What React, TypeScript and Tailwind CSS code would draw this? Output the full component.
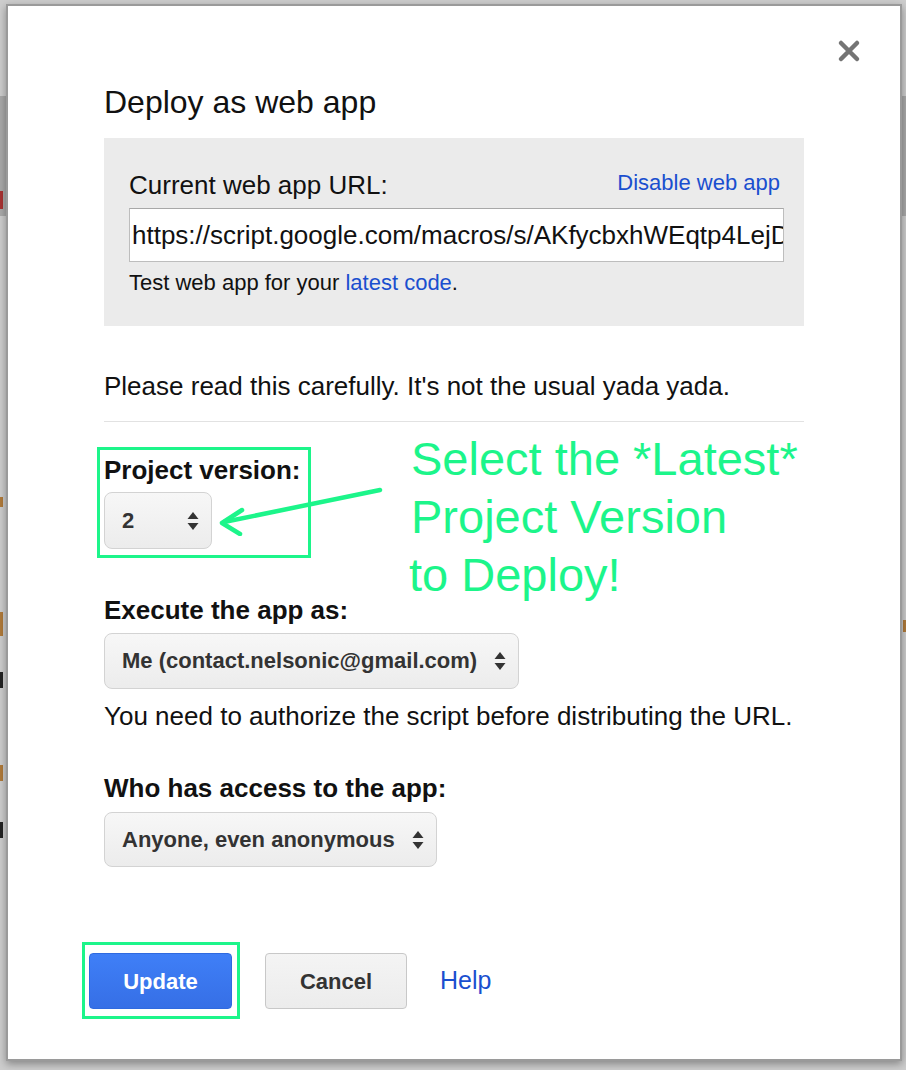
const font = { fontFamily: '"Liberation Sans", Arial, Helvetica, sans-serif' }

const Arrows = () => (
  <svg width="12" height="20" viewBox="0 0 12 20" className="shrink-0">
    <path d="M6 1 L11.5 8 L0.5 8 Z" fill="#333" />
    <path d="M6 19 L11.5 12 L0.5 12 Z" fill="#333" />
  </svg>
)

const Select = ({ label, className }: { label: string; className?: string }) => (
  <div
    className={`flex items-center gap-[17px] whitespace-nowrap rounded-[8px] border-[1.5px] border-[#d3d3d3] bg-gradient-to-b from-[#f7f7f7] to-[#ececec] pl-[17px] pr-[12px] text-[22px] font-bold text-[#333] ${className ?? ''}`}
  >
    <span className="leading-[26px]">{label}</span>
    <Arrows />
  </div>
)

export default function App() {
  return (
    <div className="relative w-[906px] h-[1070px] overflow-hidden bg-[#cdcdcd] pt-[4px] pl-[6px]" style={font}>
      {/* page behind the dialog */}
      <div className="absolute left-0 top-[96px] h-[120px] w-[906px] bg-[#a9a9a9]" />
      <div className="absolute left-0 top-[191px] h-[18px] w-[3px] bg-[#a83232]" />
      <div className="absolute left-0 top-[497px] h-[10px] w-[3px] bg-[#b07a3a]" />
      <div className="absolute left-0 top-[612px] h-[24px] w-[3px] bg-[#b07a3a]" />
      <div className="absolute left-0 top-[672px] h-[16px] w-[3px] bg-[#222]" />
      <div className="absolute left-0 top-[765px] h-[16px] w-[3px] bg-[#b07a3a]" />
      <div className="absolute left-0 top-[822px] h-[16px] w-[3px] bg-[#222]" />
      <div className="absolute right-0 top-[620px] h-[12px] w-[3px] bg-[#b07a3a]" />

      <div className="relative w-[896px] h-[1057px] border-2 border-[#9a9a9a] bg-white shadow-[0_3px_8px_rgba(0,0,0,0.35)] pl-[96px] pt-[77px]">
        {/* close */}
        <svg width="24" height="24" viewBox="0 0 24 24" className="absolute left-[829px] top-[33px]">
          <path d="M4 4 L20 20 M20 4 L4 20" stroke="#747474" strokeWidth="4.5" strokeLinecap="round" />
        </svg>

        <h1 className="text-[32px] leading-[38px] text-[#111]">Deploy as web app</h1>

        <div className="mt-[17px] w-[700px] h-[188px] bg-[#ebebeb] pl-[25px] pr-[20px] pt-[32px]">
          <div className="flex items-start justify-between">
            <span className="text-[26px] leading-[30px] text-[#111]">Current web app URL:</span>
            <span className="-mt-[2px] mr-[4px] text-[22px] leading-[30px] text-[#1a4fcf]">Disable web app</span>
          </div>
          <div className="mt-[8px] h-[54px] overflow-hidden whitespace-nowrap border border-[#bdbdbd] border-t-[#a8a8a8] bg-white pl-[2px] text-[26px] leading-[52px] text-[#111]">
            https://script.google.com/macros/s/AKfycbxhWEqtp4LejDz8Kx
          </div>
          <p className="mt-[8px] text-[22px] leading-[26px] text-[#111]">
            Test web app for your <span className="text-[#1a4fcf]">latest code</span>.
          </p>
        </div>

        <p className="mt-[45px] text-[26px] leading-[30px] text-[#111]">
          Please read this carefully. It's not the usual yada yada.
        </p>
        <div className="mt-[20px] h-px w-[700px] bg-[#e2e2e2]" />

        <h2 className="mt-[33px] text-[26px] font-bold leading-[30px] text-[#111]">Project version:</h2>
        <Select label="2" className="mt-[7px] h-[57px] w-[108px] justify-between" />

        <h2 className="mt-[46px] text-[26px] font-bold leading-[30px] text-[#111]">Execute the app as:</h2>
        <Select label="Me (contact.nelsonic@gmail.com)" className="mt-[8px] h-[56px] w-fit" />
        <p className="mt-[12px] text-[26px] leading-[30px] text-[#111]">
          You need to authorize the script before distributing the URL.
        </p>

        <h2 className="mt-[42px] text-[26px] font-bold leading-[30px] text-[#111]">Who has access to the app:</h2>
        <Select label="Anyone, even anonymous" className="mt-[9px] h-[55px] w-fit" />

        <div className="mt-[86px] -ml-[15px] flex items-center gap-[33px]">
          <button className="h-[56px] w-[143px] rounded-[4px] border border-[#2f6ae0] bg-gradient-to-b from-[#3f7ff7] to-[#366fe6] text-[22px] font-bold text-white">
            Update
          </button>
          <button className="h-[56px] w-[142px] rounded-[4px] border border-[#c8c8c8] bg-gradient-to-b from-[#f4f4f4] to-[#ececec] text-[22px] font-bold text-[#333]">
            Cancel
          </button>
          <span className="text-[25px] text-[#1a4fcf]">Help</span>
        </div>

        {/* annotations */}
        <div className="absolute left-[89px] top-[441px] h-[111px] w-[214px] border-[3px] border-[#1cf58a]" />
        <div className="absolute left-[74px] top-[936px] h-[77px] w-[158px] border-[3px] border-[#1cf58a]" />
        <svg width="180" height="60" viewBox="0 0 180 60" className="absolute left-[200px] top-[470px]">
          <path d="M172 14 L16 46" stroke="#1cf58a" strokeWidth="4.5" strokeLinecap="round" />
          <path d="M34 34 L14 47 L32 58" stroke="#1cf58a" strokeWidth="4.5" strokeLinecap="round" strokeLinejoin="round" fill="none" />
        </svg>
        <div className="absolute left-[403px] top-[424px] text-[47px] leading-[58px] text-[#1cf58a]">
          <div>Select the *Latest*</div>
          <div>Project Version</div>
          <div className="-ml-[2px]">to Deploy!</div>
        </div>
      </div>
    </div>
  )
}
